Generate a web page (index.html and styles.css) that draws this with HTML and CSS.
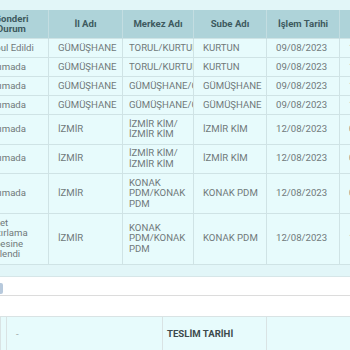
FILE: index.html
```html
<!DOCTYPE html>
<html lang="tr">
<head>
<meta charset="utf-8">
<link rel="stylesheet" href="styles.css">
</head>
<body>
<div class="panel">
  <div class="scroll">
    <table class="grid">
      <colgroup>
        <col class="c1"><col class="c2"><col class="c3"><col class="c4"><col class="c5"><col class="c6">
      </colgroup>
      <thead>
        <tr><th>Gonderi<br>Durum</th><th>İl Adı</th><th>Merkez Adı</th><th>Sube Adı</th><th>İşlem Tarihi</th><th>İşlem Saati</th></tr>
      </thead>
      <tbody>
        <tr><td>Kabul Edildi</td><td>GÜMÜŞHANE</td><td class="m"><div class="clip">TORUL/KURTUN</div></td><td>KURTUN</td><td>09/08/2023</td><td>10:12</td></tr>
        <tr><td>Taşımada</td><td>GÜMÜŞHANE</td><td class="m"><div class="clip">TORUL/KURTUN</div></td><td>KURTUN</td><td>09/08/2023</td><td>11:40</td></tr>
        <tr><td>Taşımada</td><td>GÜMÜŞHANE</td><td class="m"><div class="clip">GÜMÜŞHANE/GÜMÜŞHANE</div></td><td>GÜMÜŞHANE</td><td>09/08/2023</td><td>15:21</td></tr>
        <tr><td>Taşımada</td><td>GÜMÜŞHANE</td><td class="m"><div class="clip">GÜMÜŞHANE/GÜMÜŞHANE</div></td><td>GÜMÜŞHANE</td><td>09/08/2023</td><td>17:05</td></tr>
        <tr><td>Taşımada</td><td>İZMİR</td><td class="m"><div class="clip">İZMİR KİM/ İZMİR KİM</div></td><td>İZMİR KİM</td><td>12/08/2023</td><td>02:14</td></tr>
        <tr><td>Taşımada</td><td>İZMİR</td><td class="m"><div class="clip">İZMİR KİM/ İZMİR KİM</div></td><td>İZMİR KİM</td><td>12/08/2023</td><td>03:48</td></tr>
        <tr><td>Taşımada</td><td>İZMİR</td><td class="m"><div class="clip">KONAK PDM/KONAK PDM</div></td><td>KONAK PDM</td><td>12/08/2023</td><td>07:30</td></tr>
        <tr><td>Paket Hazırlama Şubesine Yüklendi</td><td>İZMİR</td><td class="m"><div class="clip">KONAK PDM/KONAK PDM</div></td><td>KONAK PDM</td><td>12/08/2023</td><td>10:02</td></tr>
      </tbody>
    </table>
  </div>
</div>
<div class="section">
  <div class="toolbar"><span class="chip"></span></div>
  <div class="spacer"></div>
  <table class="info">
    <colgroup><col class="i1"><col class="i2"><col class="i3"><col class="i4"></colgroup>
    <tr><td></td><td class="val">-</td><td class="lbl">TESLİM TARİHİ</td><td></td></tr>
  </table>
</div>
</body>
</html>
```
FILE: styles.css
```css
html, body {
  margin: 0;
  padding: 0;
  background: #ffffff;
  overflow: hidden;
  font-family: Roboto, "Liberation Sans", sans-serif;
}

.panel {
  background: #e2f6f8;
  padding: 10px 0 11px;
  border-bottom: 1px solid #d6e6e8;
}

.scroll {
  overflow: hidden;
  width: 350px;
}

.grid {
  margin-left: -26px;
  border-collapse: collapse;
  table-layout: fixed;
  width: 448px;
  font-size: 9.6px;
  line-height: 10.5px;
}

.c1 { width: 74px; }
.c2 { width: 74px; }
.c3 { width: 71px; }
.c4 { width: 73px; }
.c5 { width: 73px; }
.c6 { width: 83px; }

.grid th {
  background: #aed3d9;
  color: #3e5a5f;
  font-weight: 700;
  padding: 3.5px 4px;
  border-left: 1px solid #c3dde1;
  border-right: 1px solid #c3dde1;
  text-align: center;
  vertical-align: middle;
}

.grid td {
  background: #e7fbfc;
  color: #70797a;
  padding: 3.5px 2px 4px 9px;
  border: 1px solid #cfe3e5;
  text-align: left;
  vertical-align: middle;
  overflow: hidden;
}

.grid td.m {
  padding-left: 6px;
  padding-right: 0;
}

.clip {
  overflow: hidden;
}

.section {
  background: #ffffff;
}

.toolbar {
  height: 12px;
  border-bottom: 1px solid #dcdcdc;
  padding-top: 6px;
  box-sizing: content-box;
}

.chip {
  display: block;
  width: 3px;
  height: 11px;
  background: #b7c9dc;
  border-radius: 0 2px 2px 0;
}

.spacer {
  height: 20px;
}

.info {
  border-collapse: collapse;
  table-layout: fixed;
  width: 380px;
  font-size: 9.6px;
  line-height: 11px;
}

.i1 { width: 6px; }
.i2 { width: 156px; }
.i3 { width: 104px; }
.i4 { width: 114px; }

.info td {
  background: #e7fbfc;
  border: 1px solid #d9e3e4;
  height: 34px;
  padding: 0;
  box-sizing: border-box;
  vertical-align: middle;
}

.info td.val {
  color: #9aa3a4;
  padding-left: 9px;
}

.info td.lbl {
  color: #3d4a4c;
  font-weight: 700;
  padding-left: 4px;
}
```
